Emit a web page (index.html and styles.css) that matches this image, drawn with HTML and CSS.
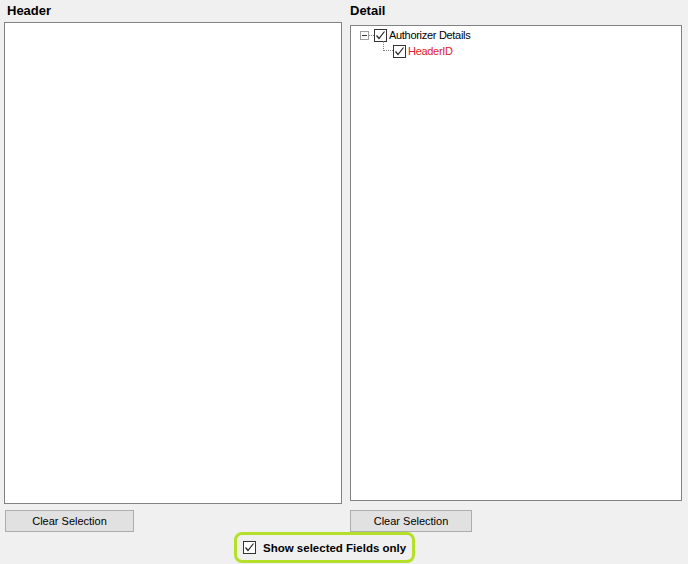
FILE: index.html
```html
<!DOCTYPE html>
<html>
<head>
<meta charset="utf-8">
<link rel="stylesheet" href="styles.css">
</head>
<body>
<div class="page">
  <div class="columns">
    <div class="col col-left">
      <div class="title">Header</div>
      <div class="box box-left"></div>
      <button class="btn btn-left">Clear Selection</button>
    </div>
    <div class="col col-right">
      <div class="title">Detail</div>
      <div class="box box-right">
        <div class="tree">
          <div class="node root">
            <span class="expander"><span class="minus"></span></span>
            <span class="dash"></span>
            <span class="cb"><svg width="13" height="13" viewBox="0 0 13 13"><rect x="0.5" y="0.5" width="12" height="12" fill="#fff" stroke="#333"/><path d="M2.5 6.5 L5 9.5 L10.5 2.5" fill="none" stroke="#222" stroke-width="1.2"/></svg></span>
            <span class="label">Authorizer Details</span>
          </div>
          <div class="node child">
            <span class="lines"></span>
            <span class="cb"><svg width="13" height="13" viewBox="0 0 13 13"><rect x="0.5" y="0.5" width="12" height="12" fill="#fff" stroke="#333"/><path d="M2.5 6.5 L5 9.5 L10.5 2.5" fill="none" stroke="#222" stroke-width="1.2"/></svg></span>
            <span class="label red">HeaderID</span>
          </div>
        </div>
      </div>
      <button class="btn btn-right">Clear Selection</button>
    </div>
  </div>
  <div class="bottom">
    <div class="highlight">
      <span class="cb big"><svg width="13" height="13" viewBox="0 0 13 13"><rect x="0.5" y="0.5" width="12" height="12" fill="#fff" stroke="#333"/><path d="M2.5 6.5 L5 9.5 L10.5 2.5" fill="none" stroke="#222" stroke-width="1.2"/></svg></span>
      <span class="show-label">Show selected Fields only</span>
    </div>
  </div>
</div>
</body>
</html>
```
FILE: styles.css
```css
html, body {
  margin: 0;
  padding: 0;
  background: #f0f0f0;
  font-family: "Liberation Sans", Arial, sans-serif;
}
.page {
  width: 688px;
  height: 564px;
  overflow: hidden;
}
.columns {
  display: flex;
  padding-left: 4px;
  gap: 8px;
}
.col {
  display: flex;
  flex-direction: column;
}
.col-left { width: 338px; }
.col-right { width: 332px; }
.title {
  font-weight: bold;
  font-size: 13px;
  color: #000;
  height: 22px;
  line-height: 22px;
  padding-left: 3px;
}
.col-right .title { padding-left: 0; }
.box {
  background: #fff;
  border: 1px solid #828282;
  box-sizing: border-box;
}
.box-left { height: 482px; }
.box-right { height: 476px; margin-top: 3px; }
.btn {
  font-family: "Liberation Sans", Arial, sans-serif;
  font-size: 11px;
  color: #000;
  background: #e1e1e1;
  border: 1px solid #adadad;
  height: 22px;
  padding: 0;
  box-sizing: border-box;
}
.btn-left { width: 129px; margin-left: 1px; margin-top: 6px; }
.btn-right { width: 122px; margin-top: 9px; }
.tree {
  padding: 1px 0 0 9px;
}
.node {
  display: flex;
  align-items: center;
  height: 16px;
  position: relative;
}
.expander {
  width: 9px;
  height: 9px;
  border: 1px solid #a0a0a0;
  box-sizing: border-box;
  position: relative;
  background: #fff;
}
.minus {
  position: absolute;
  left: 1px;
  top: 3px;
  width: 5px;
  height: 1px;
  background: #333;
}
.dash {
  width: 5px;
  height: 0;
  border-top: 1px dotted #808080;
}
.cb {
  display: inline-flex;
  width: 13px;
  height: 13px;
}
.cb svg { display: block; }
.label {
  font-size: 11px;
  letter-spacing: -0.3px;
  color: #000;
  margin-left: 2px;
  white-space: nowrap;
}
.label.red { color: #e3201b; margin-left: 2px; }
.child { padding-left: 33px; }
.lines {
  position: absolute;
  left: 23px;
  top: -2px;
  width: 9px;
  height: 9px;
  border-left: 1px dotted #808080;
  border-bottom: 1px dotted #808080;
}
.bottom {
  display: flex;
  padding-left: 234px;
  margin-top: 0;
}
.highlight {
  display: flex;
  align-items: center;
  height: 31px;
  width: 181px;
  box-sizing: border-box;
  border: 3px solid #b5e02a;
  border-radius: 8px;
  padding-left: 6px;
}
.show-label {
  font-size: 11.5px;
  font-weight: bold;
  margin-left: 7px;
  white-space: nowrap;
}
```
